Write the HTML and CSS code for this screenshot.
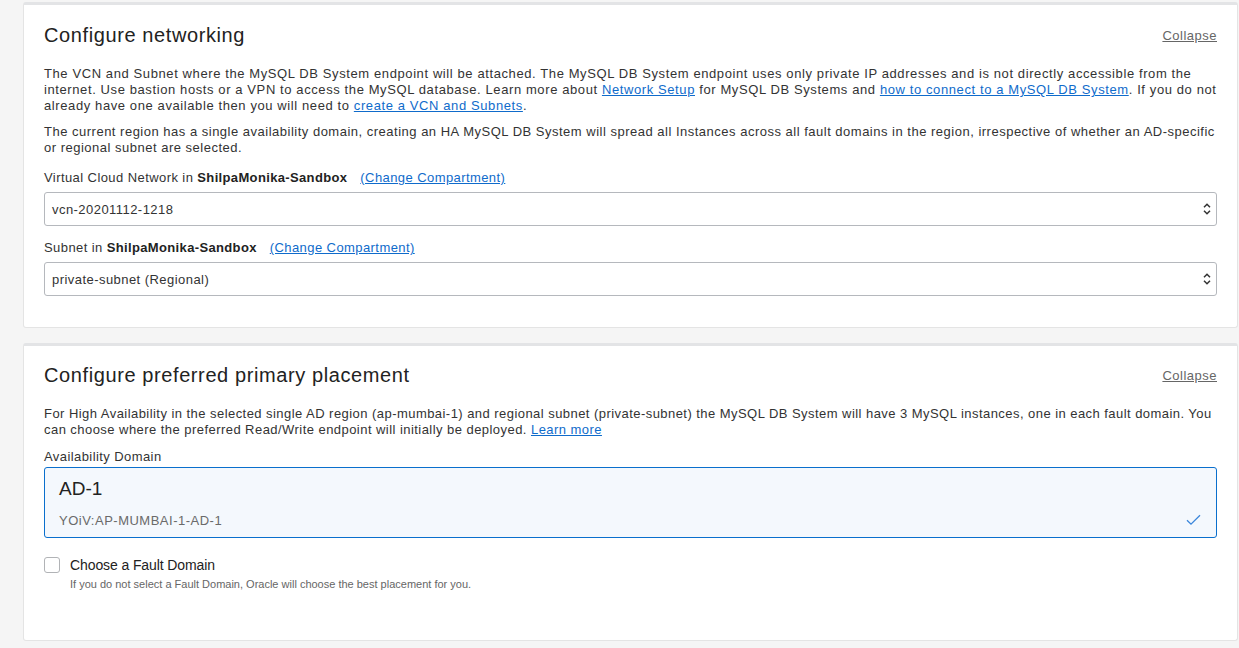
FILE: index.html
```html
<!DOCTYPE html>
<html>
<head>
<meta charset="utf-8">
<link rel="stylesheet" href="styles.css">
</head>
<body>
<div class="page">
  <section class="card card-net">
    <div class="card-head">
      <h2 class="card-title">Configure networking</h2>
      <a class="collapse" href="#">Collapse</a>
    </div>
    <p class="para first">The VCN and Subnet where the MySQL DB System endpoint will be attached. The MySQL DB System endpoint uses only private IP addresses and is not directly accessible from the internet. Use bastion hosts or a VPN to access the MySQL database. Learn more about <a class="link" href="#">Network Setup</a> for MySQL DB Systems and <a class="link" href="#">how to connect to a MySQL DB System</a>. If you do not already have one available then you will need to <a class="link" href="#">create a VCN and Subnets</a>.</p>
    <p class="para second">The current region has a single availability domain, creating an HA MySQL DB System will spread all Instances across all fault domains in the region, irrespective of whether an <span class="nowrap">AD-specific</span> or regional subnet are selected.</p>
    <div class="field">
      <div class="label">Virtual Cloud Network in <b>ShilpaMonika-Sandbox</b><a class="link comp" href="#">(Change Compartment)</a></div>
      <div class="select">
        <span>vcn-20201112-1218</span>
        <svg class="chev" width="8" height="14" viewBox="0 0 8 14"><path d="M1 5.2 L4 2.2 L7 5.2 M1 8.8 L4 11.8 L7 8.8" fill="none" stroke="#333" stroke-width="1.5"/></svg>
      </div>
    </div>
    <div class="field">
      <div class="label">Subnet in <b>ShilpaMonika-Sandbox</b><a class="link comp" href="#">(Change Compartment)</a></div>
      <div class="select">
        <span>private-subnet (Regional)</span>
        <svg class="chev" width="8" height="14" viewBox="0 0 8 14"><path d="M1 5.2 L4 2.2 L7 5.2 M1 8.8 L4 11.8 L7 8.8" fill="none" stroke="#333" stroke-width="1.5"/></svg>
      </div>
    </div>
  </section>

  <section class="card card-place">
    <div class="card-head">
      <h2 class="card-title">Configure preferred primary placement</h2>
      <a class="collapse" href="#">Collapse</a>
    </div>
    <p class="para first">For High Availability in the selected single AD region (ap-mumbai-1) and regional subnet (private-subnet) the MySQL DB System will have 3 MySQL instances, one in each fault domain. You can choose where the preferred Read/Write endpoint will initially be deployed. <a class="link" href="#">Learn more</a></p>
    <div class="label ad-label">Availability Domain</div>
    <div class="tile">
      <div class="tile-name">AD-1</div>
      <div class="tile-row">
        <span class="tile-sub">YOiV:AP-MUMBAI-1-AD-1</span>
        <svg class="check" width="15" height="12" viewBox="0 0 15 12"><path d="M1 6.2 L5 10.2 L14 1.2" fill="none" stroke="#3a86db" stroke-width="1.3"/></svg>
      </div>
    </div>
    <div class="fault">
      <span class="box"></span>
      <div class="fault-text">
        <div class="fault-label">Choose a Fault Domain</div>
        <div class="fault-help">If you do not select a Fault Domain, Oracle will choose the best placement for you.</div>
      </div>
    </div>
  </section>
</div>
</body>
</html>
```

FILE: styles.css
```css
* { box-sizing: border-box; }
html, body { margin: 0; padding: 0; }
body {
  background: #f5f5f5;
  font-family: "Liberation Sans", Arial, sans-serif;
  color: #333;
}
.page {
  padding: 2px 1px 0 23px;
  display: flex;
  flex-direction: column;
  gap: 15px;
}
.card {
  background: #fff;
  border: 1px solid #e4e4e4;
  border-top: 3px solid #e3e4e6;
  border-radius: 3px;
  padding: 18px 20px 31px;
}
.card-place { padding-top: 17px; padding-bottom: 49px; }
.card-head {
  display: flex;
  justify-content: space-between;
  align-items: center;
  height: 24px;
}
.card-title {
  margin: 0;
  font-size: 20px;
  line-height: 24px;
  font-weight: normal;
  color: #222;
  letter-spacing: 0.6px;
}
.collapse {
  font-size: 13px;
  color: #666;
  text-decoration: underline;
  letter-spacing: 0.5px;
}
.para {
  margin: 10px 0 0;
  font-size: 13px;
  line-height: 16px;
  letter-spacing: 0.6px;
}
.para.second { letter-spacing: 0.5px; }
.nowrap { white-space: nowrap; }
.card-place .para { letter-spacing: 0.45px; }
.para.first { margin-top: 19px; }
.link { color: #0f6bcb; text-decoration: underline; }
.field { margin-top: 14px; }
.label {
  font-size: 13px;
  line-height: 16px;
  letter-spacing: 0.42px;
}
.label b { font-weight: bold; color: #222; letter-spacing: 0.35px; }
.comp { margin-left: 13px; }
.select {
  margin-top: 6px;
  height: 34px;
  border: 1px solid #b5b8bd;
  border-radius: 3px;
  display: flex;
  align-items: center;
  justify-content: space-between;
  padding: 0 5px 0 7px;
  font-size: 13px;
  letter-spacing: 0.45px;
}
.chev { display: block; }
.ad-label { margin-top: 11px; }
.tile {
  margin-top: 2px;
  height: 71px;
  border: 1px solid #0a6fcd;
  border-radius: 3px;
  background: #f4f8fd;
  padding: 10px 14px 0 14px;
}
.tile-name {
  font-size: 19px;
  line-height: 22px;
  color: #222;
}
.tile-row {
  margin-top: 12px;
  display: flex;
  justify-content: space-between;
  align-items: center;
  height: 16px;
}
.tile-sub { font-size: 13px; color: #6a6a6a; letter-spacing: 0.5px; }
.check { display: block; margin-right: 1px; }
.fault {
  margin-top: 19px;
  display: flex;
  gap: 10px;
}
.box {
  width: 16px;
  height: 16px;
  border: 1px solid #b1b3b6;
  border-radius: 3px;
  background: #fff;
  flex: none;
}
.fault-label {
  font-size: 14px;
  line-height: 16px;
  color: #222;
  letter-spacing: -0.1px;
}
.fault-help {
  margin-top: 5px;
  font-size: 11px;
  line-height: 13px;
  color: #666;
}
```
